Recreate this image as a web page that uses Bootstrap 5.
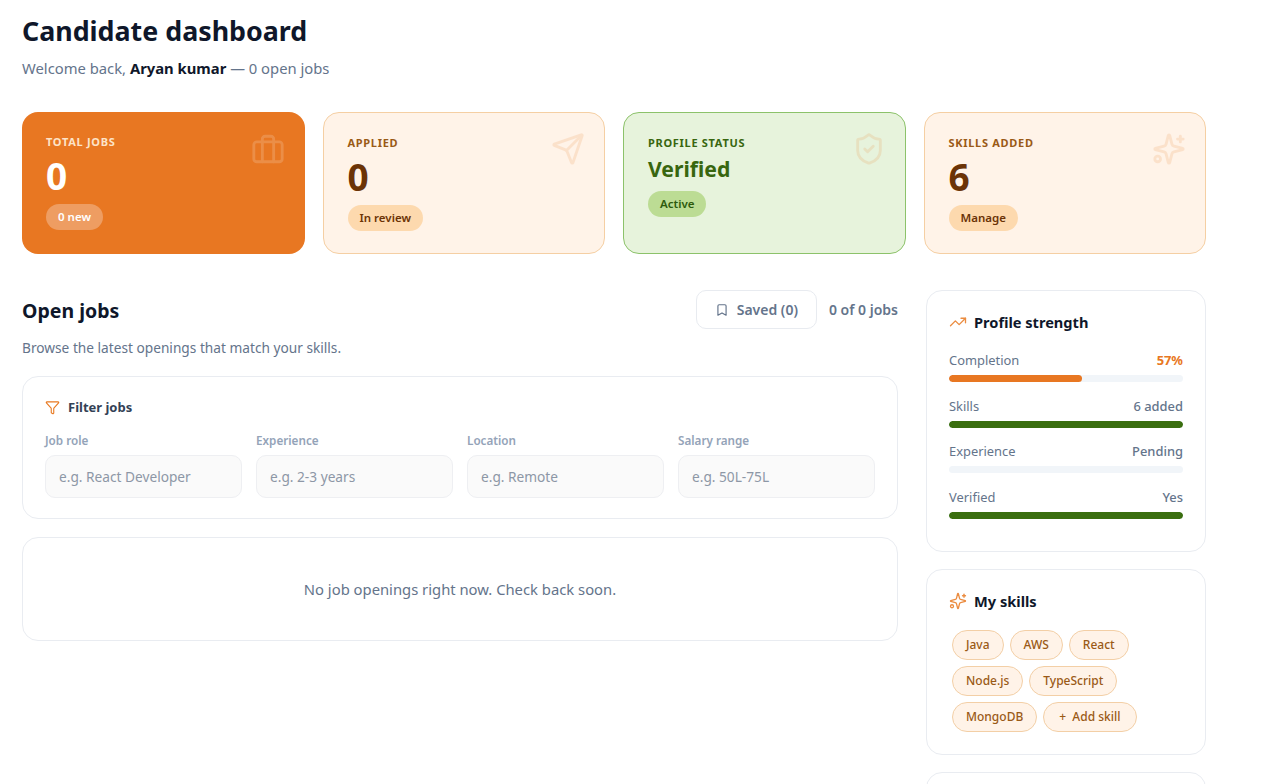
<!DOCTYPE html>
<html lang="en">
<head>
<meta charset="utf-8">
<title>Candidate dashboard</title>
<link href="https://cdn.jsdelivr.net/npm/bootstrap@5.3.0/dist/css/bootstrap.min.css" rel="stylesheet">
<style>
body{font-family:"Noto Sans","Open Sans","Liberation Sans",sans-serif;background:#fff;color:#0f172a;overflow:hidden;height:784px}
.page-wrap{width:1206px;padding:13px 0 0 22px}
.page-title{font-size:26.8px;font-weight:700;line-height:36px;margin:0 0 9px;color:#0f172a}
.page-sub{font-size:14.8px;line-height:20px;color:#64748b;margin:0 0 34px}
.page-sub b{color:#0f172a;font-weight:700}
.stat-grid{display:grid;grid-template-columns:repeat(4,1fr);gap:18px;margin-bottom:36px}
.stat{height:142px;border-radius:16px;border:1px solid #f5cfa3;background:#fff3e8;padding:22px 24px;position:relative;color:#6b3306}
.stat-label{font-size:11px;font-weight:700;letter-spacing:.7px;line-height:16px;color:#9a5a16;text-transform:uppercase}
.stat-val{font-size:37px;font-weight:700;line-height:46px;margin-top:3px}
.stat-val.word{font-size:21.2px;line-height:34px;margin-top:1px}
.stat-pill{display:inline-block;font-size:11.5px;font-weight:600;line-height:16px;padding:5px 12px;border-radius:99px;background:#fdd9ae;margin-top:5px}
.stat svg{position:absolute;top:19px;right:19px;width:34px;height:34px;stroke:#e8781f;opacity:.14}
.stat-dark{background:#e87722;border:0;color:#fff}
.stat-dark .stat-label{color:#fde3c8}
.stat-dark .stat-pill{background:#ee9d62;color:#fff}
.stat-dark svg{stroke:#fff;opacity:.17;top:20px;right:20px}
.stat-green{background:#e7f3dc;border-color:#8cc26a;color:#38660f}
.stat-green .stat-label{color:#38660f}
.stat-green .stat-pill{background:#bcdc94;color:#2d5a0c;margin-top:5px}
.content-grid{display:grid;grid-template-columns:876px 280px;gap:28px}
.head-title{font-size:19.5px;font-weight:700;line-height:26px;color:#0f172a;margin:2px 0 0}
.head-sub{font-size:13.7px;line-height:18px;color:#64748b;margin:10px 0 19px}
.saved-btn{display:inline-flex;align-items:center;gap:8px;height:39px;padding:0 18px;border:1px solid #e8ebf0;border-radius:10px;background:#fff;color:#64748b;font-size:14px;font-weight:600}
.saved-btn svg{width:14px;height:14px;stroke:#64748b}
.count-txt{font-size:14px;font-weight:600;color:#64748b}
.panel{background:#fff;border:1px solid #e9ecf1;border-radius:16px}
.filter-panel{padding:20px 22px;margin-bottom:18px;height:143px}
.filter-head{display:flex;align-items:center;gap:8px;font-size:13px;font-weight:700;color:#334155;line-height:20px;margin-bottom:15px}
.filter-head svg{width:15px;height:15px;stroke:#e8781f;stroke-width:1.75}
.filter-grid{display:grid;grid-template-columns:repeat(4,1fr);gap:14px}
.filter-label{display:block;font-size:11.7px;font-weight:600;color:#94a3b8;line-height:16px;margin-bottom:7px}
.filter-input{height:43px;border-radius:10px;background:#fafafa;border:1px solid #eeeff2;font-size:13.7px;padding:0 13px;box-shadow:none}
.filter-input::placeholder{color:#8d97a6}
.empty-panel{height:104px;display:flex;align-items:center;justify-content:center;font-size:14.8px;color:#64748b}
.side-panel{padding:20px 22px 0;margin-bottom:17px}
.side-title{display:flex;align-items:center;gap:7px;font-size:14.6px;font-weight:700;line-height:22px;color:#0f172a}
.side-title svg{width:18px;height:18px;stroke:#e8781f;stroke-width:1.75;opacity:.85}
.strength-card{height:262px}
.skills-card{height:186px}
.tail-card{height:60px}
.meters{padding-top:18px}
.meter-row{display:flex;justify-content:space-between;font-size:12.9px;line-height:18px;color:#64748b;margin-bottom:6px}
.meter-row b{font-weight:500}
.meter{height:7px;background:#f1f5f9;border-radius:99px;margin-bottom:14.5px;overflow:hidden}
.meter .progress-bar{border-radius:99px}
.fill-orange{background:#e87722}
.fill-green{background:#3a6e0f}
.meter-row b.pct{color:#e87722;font-weight:700}
.skills-title{margin-bottom:18px}
.skills-wrap{display:flex;flex-wrap:wrap;gap:6px;padding:0 3px}
.skill-pill{display:inline-flex;align-items:center;height:30px;padding:0 13px;border:1px solid #f3cfa6;background:#fff3e8;border-radius:99px;font-size:12px;font-weight:500;color:#9a5a16}
.skill-add{padding:0 15px}
</style>
</head>
<body>
<svg width="0" height="0" class="d-none">
<symbol id="i-brief" viewBox="0 0 24 24"><rect x="2" y="7" width="20" height="14" rx="2"/><path d="M16 21V5a2 2 0 0 0-2-2h-4a2 2 0 0 0-2 2v16"/></symbol>
<symbol id="i-send" viewBox="0 0 24 24"><path d="M14.536 21.686a.5.5 0 0 0 .937-.024l6.5-19a.496.496 0 0 0-.635-.635l-19 6.5a.5.5 0 0 0-.024.937l7.93 3.18a2 2 0 0 1 1.112 1.11z"/><path d="m21.854 2.147-10.94 10.939"/></symbol>
<symbol id="i-shield" viewBox="0 0 24 24"><path d="M20 13c0 5-3.5 7.5-7.66 8.95a1 1 0 0 1-.67-.01C7.5 20.5 4 18 4 13V6a1 1 0 0 1 1-1c2 0 4.5-1.2 6.24-2.72a1.17 1.17 0 0 1 1.52 0C14.51 3.81 17 5 19 5a1 1 0 0 1 1 1z"/><path d="m9 12 2 2 4-4"/></symbol>
<symbol id="i-spark" viewBox="0 0 24 24"><path d="M9.937 15.5A2 2 0 0 0 8.5 14.063l-6.135-1.582a.5.5 0 0 1 0-.962L8.5 9.936A2 2 0 0 0 9.937 8.5l1.582-6.135a.5.5 0 0 1 .963 0L14.063 8.5A2 2 0 0 0 15.5 9.937l6.135 1.581a.5.5 0 0 1 0 .964L15.5 14.063a2 2 0 0 0-1.437 1.437l-1.582 6.135a.5.5 0 0 1-.963 0z"/><path d="M20 3v4"/><path d="M22 5h-4"/><circle cx="4" cy="19" r="2"/></symbol>
<symbol id="i-trend" viewBox="0 0 24 24"><path d="M22 7 13.5 15.5 8.5 10.5 2 17"/><path d="M16 7h6v6"/></symbol>
<symbol id="i-funnel" viewBox="0 0 24 24"><path d="M10 20a1 1 0 0 0 .553.895l2 1A1 1 0 0 0 14 21v-7a2 2 0 0 1 .517-1.341L21.74 4.67A1 1 0 0 0 21 3H3a1 1 0 0 0-.742 1.67l7.225 7.989A2 2 0 0 1 10 14z"/></symbol>
<symbol id="i-mark" viewBox="0 0 24 24"><path d="m19 21-7-4-7 4V5a2 2 0 0 1 2-2h10a2 2 0 0 1 2 2v16z"/></symbol>
</svg>
<main class="page-wrap">
  <h1 class="page-title">Candidate dashboard</h1>
  <p class="page-sub">Welcome back, <b>Aryan kumar</b> — 0 open jobs</p>

  <section class="stat-grid">
    <div class="stat stat-dark">
      <div class="stat-label">Total jobs</div>
      <div class="stat-val">0</div>
      <span class="stat-pill">0 new</span>
      <svg fill="none" stroke-width="2" stroke-linecap="round" stroke-linejoin="round"><use href="#i-brief"/></svg>
    </div>
    <div class="stat">
      <div class="stat-label">Applied</div>
      <div class="stat-val">0</div>
      <span class="stat-pill">In review</span>
      <svg fill="none" stroke-width="2" stroke-linecap="round" stroke-linejoin="round"><use href="#i-send"/></svg>
    </div>
    <div class="stat stat-green">
      <div class="stat-label">Profile status</div>
      <div class="stat-val word">Verified</div>
      <span class="stat-pill">Active</span>
      <svg fill="none" stroke-width="2" stroke-linecap="round" stroke-linejoin="round"><use href="#i-shield"/></svg>
    </div>
    <div class="stat">
      <div class="stat-label">Skills added</div>
      <div class="stat-val">6</div>
      <span class="stat-pill">Manage</span>
      <svg fill="none" stroke-width="2" stroke-linecap="round" stroke-linejoin="round"><use href="#i-spark"/></svg>
    </div>
  </section>

  <section class="content-grid">
    <div>
      <div class="d-flex justify-content-between align-items-center">
        <h2 class="head-title">Open jobs</h2>
        <div class="d-flex align-items-center gap-2">
          <button type="button" class="saved-btn me-1"><svg fill="none" stroke-width="2" stroke-linecap="round" stroke-linejoin="round"><use href="#i-mark"/></svg>Saved (0)</button>
          <span class="count-txt">0 of 0 jobs</span>
        </div>
      </div>
      <p class="head-sub">Browse the latest openings that match your skills.</p>
      <div class="panel filter-panel">
        <div class="filter-head"><svg fill="none" stroke-linecap="round" stroke-linejoin="round"><use href="#i-funnel"/></svg>Filter jobs</div>
        <div class="filter-grid">
          <div><label class="filter-label">Job role</label><input class="form-control filter-input" placeholder="e.g. React Developer"></div>
          <div><label class="filter-label">Experience</label><input class="form-control filter-input" placeholder="e.g. 2-3 years"></div>
          <div><label class="filter-label">Location</label><input class="form-control filter-input" placeholder="e.g. Remote"></div>
          <div><label class="filter-label">Salary range</label><input class="form-control filter-input" placeholder="e.g. 50L-75L"></div>
        </div>
      </div>
      <div class="panel empty-panel">No job openings right now. Check back soon.</div>
    </div>
    <aside>
      <div class="panel side-panel strength-card">
        <div class="side-title"><svg fill="none" stroke-linecap="round" stroke-linejoin="round"><use href="#i-trend"/></svg>Profile strength</div>
        <div class="meters">
          <div class="meter-row"><span>Completion</span><b class="pct">57%</b></div>
          <div class="progress meter"><div class="progress-bar fill-orange" style="width:57%"></div></div>
          <div class="meter-row"><span>Skills</span><b>6 added</b></div>
          <div class="progress meter"><div class="progress-bar fill-green" style="width:100%"></div></div>
          <div class="meter-row"><span>Experience</span><b>Pending</b></div>
          <div class="progress meter"><div class="progress-bar fill-green" style="width:0%"></div></div>
          <div class="meter-row"><span>Verified</span><b>Yes</b></div>
          <div class="progress meter"><div class="progress-bar fill-green" style="width:100%"></div></div>
        </div>
      </div>
      <div class="panel side-panel skills-card">
        <div class="side-title skills-title"><svg fill="none" stroke-linecap="round" stroke-linejoin="round"><use href="#i-spark"/></svg>My skills</div>
        <div class="skills-wrap">
          <span class="skill-pill">Java</span><span class="skill-pill">AWS</span><span class="skill-pill">React</span>
          <span class="skill-pill">Node.js</span><span class="skill-pill">TypeScript</span>
          <span class="skill-pill">MongoDB</span><span class="skill-pill skill-add">+&nbsp; Add skill</span>
        </div>
      </div>
      <div class="panel side-panel tail-card"></div>
    </aside>
  </section>
</main>
</body>
</html>
